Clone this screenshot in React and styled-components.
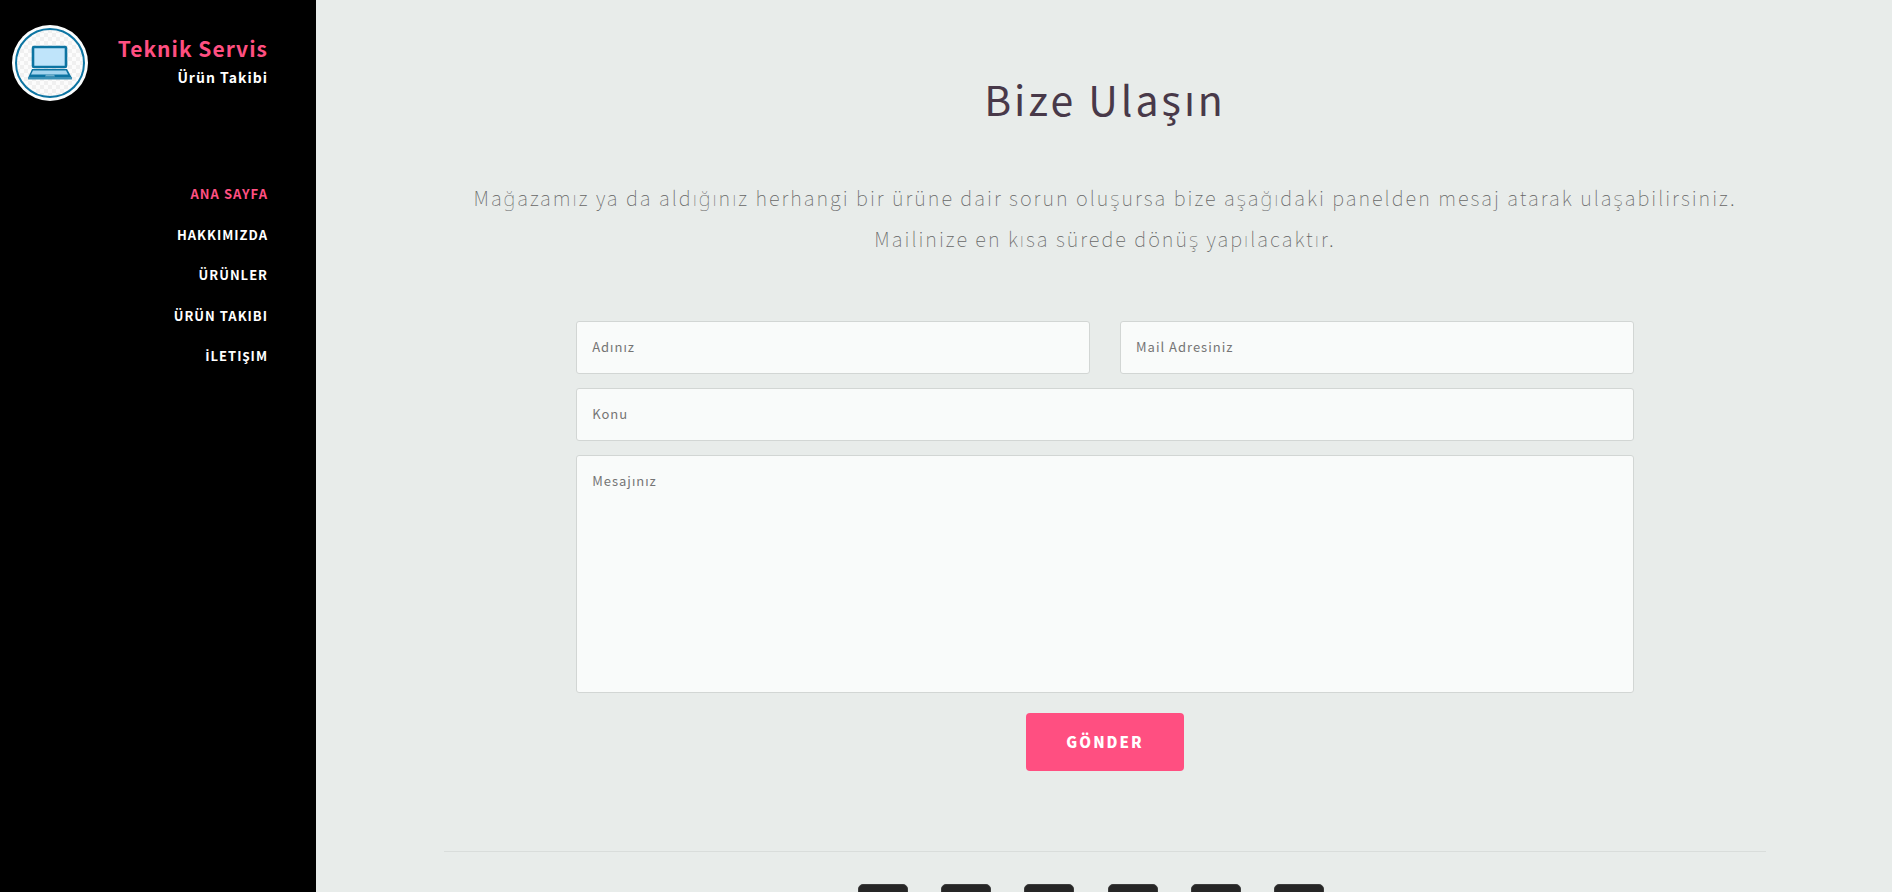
import React from "react";
import styled, { createGlobalStyle } from "styled-components";

const GlobalStyle = createGlobalStyle`
  *, *::before, *::after { box-sizing: border-box; }
  body {
    margin: 0;
    background: #e8ecea;
    font-family: "Noto Sans CJK JP", "Noto Sans", sans-serif;
  }
`;

const Page = styled.div`
  display: flex;
  height: 100vh;
  overflow: hidden;
`;

const Sidebar = styled.aside`
  flex: 0 0 316px;
  padding: 25px 48px 0 12px;
  background: #000;
  color: #fff;
`;

const Brand = styled.header`
  display: flex;
  justify-content: space-between;
  align-items: flex-start;
  height: 76px;
`;

const BrandText = styled.div`
  padding-top: 7px;
  text-align: right;
`;

const BrandName = styled.h1`
  margin: 0;
  color: #ff4f81;
  font-size: 21px;
  font-weight: 700;
  line-height: 32px;
  letter-spacing: 1px;
`;

const BrandTagline = styled.p`
  margin: 0;
  font-size: 14px;
  font-weight: 700;
  line-height: 26px;
  letter-spacing: 1px;
`;

const NavList = styled.ul`
  display: flex;
  flex-direction: column;
  align-items: flex-end;
  justify-content: space-between;
  height: 186px;
  margin: 81px 0 0;
  padding: 0;
  list-style: none;
`;

const NavLink = styled.a`
  display: block;
  color: ${({ $active }) => ($active ? "#ff4f81" : "#fff")};
  font-size: 13px;
  font-weight: 700;
  line-height: 24px;
  letter-spacing: 1px;
  text-decoration: none;
`;

const DottedCapital = styled.span`
  font-family: "Open Sans", sans-serif;
`;

const Main = styled.main`
  flex: 1;
  min-width: 0;
  padding: 62px 0 0 2px;
  overflow-y: auto;
  scrollbar-width: none;
`;

const Content = styled.div`
  width: 84%;
  margin: 0 auto;
`;

const Contact = styled.section`
  padding-bottom: 80px;
  border-bottom: 1px solid #d9dddb;
`;

const Title = styled.h2`
  margin: 0 0 43px;
  color: #483949;
  font-size: 41px;
  font-weight: 400;
  line-height: 72px;
  letter-spacing: 3px;
  text-align: center;
`;

const Intro = styled.p`
  margin: 0 0 62px;
  color: #666;
  font-size: 20px;
  font-weight: 100;
  line-height: 41px;
  letter-spacing: 2px;
  text-align: center;
`;

const Form = styled.form`
  display: grid;
  grid-template-columns: 1fr 1fr;
  gap: 14px 30px;
  width: 80%;
  margin: 0 auto;
`;

const Field = styled.input`
  grid-column: ${({ $wide }) => ($wide ? "1 / -1" : "auto")};
  min-width: 0;
  height: 53px;
  padding: 0 15px 2px;
  border: 1px solid #d2d6d4;
  border-radius: 3px;
  background: #f9fbfa;
  color: #483949;
  font: 400 13px/24px "Noto Sans CJK JP", "Noto Sans", sans-serif;
  letter-spacing: 1px;
  &::placeholder { color: #757575; opacity: 1; }
`;

const Message = styled(Field)`
  height: 238px;
  padding: 13px 15px;
  resize: none;
`;

const SubmitButton = styled.button`
  grid-column: 1 / -1;
  justify-self: center;
  height: 58px;
  margin-top: 6px;
  padding: 0 40px;
  border: 0;
  border-radius: 4px;
  background: #ff4f81;
  color: #fff;
  font: 900 15px/24px "Noto Sans CJK JP", "Noto Sans", sans-serif;
  letter-spacing: 2px;
`;

const SocialList = styled.ul`
  display: flex;
  justify-content: space-between;
  max-width: 467px;
  margin: 32px auto 64px;
  padding: 0;
  list-style: none;
`;

const Footer = styled.footer`
  padding-right: 28px;
`;

const SocialLink = styled.a`
  display: block;
  width: 50px;
  height: 50px;
  border-radius: 5px;
  border: 1px solid #3c3c3c;
  background: #262626;
`;

const navItems = [
  "ANA SAYFA",
  "HAKKIMIZDA",
  "ÜRÜNLER",
  "ÜRÜN TAKIBI",
  <><DottedCapital>İ</DottedCapital>LETIŞIM</>,
];
const socials = ["Facebook", "Twitter", "Instagram", "LinkedIn", "YouTube", "Pinterest"];

function Logo() {
  return (
    <svg width="76" height="76" viewBox="0 0 76 76" aria-hidden="true">
      <defs>
        <pattern id="checks" width="8" height="8" patternUnits="userSpaceOnUse">
          <rect width="8" height="8" fill="#fcfcfc" />
          <path d="M0 0h4v4H0zM4 4h4v4H4z" fill="#f0f0f0" />
        </pattern>
      </defs>
      <circle cx="38" cy="38" r="38" fill="#fbfdfd" />
      <circle cx="38" cy="38" r="34" fill="url(#checks)" stroke="#0c74a2" strokeWidth="2" />
      <rect x="21" y="22" width="33" height="20" rx="1" fill="#bfe4fa" stroke="#0c74a2" strokeWidth="2.6" />
      <path d="M20 44h35l5 9H16z" fill="#0c74a2" />
      <path d="M21 45.5h33l2 4H19z" fill="#a3d5ef" />
      <path d="M34 49.5h8l1 2H33z" fill="#6caecb" />
      <path d="M16 52h44v2.500H16z" fill="#3c91b6" />
    </svg>
  );
}

export default function App() {
  return (
    <>
      <GlobalStyle />
      <Page>
        <Sidebar>
          <Brand>
            <Logo />
            <BrandText>
              <BrandName>Teknik Servis</BrandName>
              <BrandTagline>Ürün Takibi</BrandTagline>
            </BrandText>
          </Brand>
          <nav>
            <NavList>
              {navItems.map((item, index) => (
                <li key={index}>
                  <NavLink href="#" $active={index === 0}>{item}</NavLink>
                </li>
              ))}
            </NavList>
          </nav>
        </Sidebar>
        <Main>
          <Content>
            <Contact>
              <Title>Bize Ulaşın</Title>
              <Intro>
                Mağazamız ya da aldığınız herhangi bir ürüne dair sorun oluşursa bize aşağıdaki
                panelden mesaj atarak ulaşabilirsiniz.
                <br />
                Mailinize en kısa sürede dönüş yapılacaktır.
              </Intro>
              <Form onSubmit={(event) => event.preventDefault()}>
                <Field type="text" placeholder="Adınız" aria-label="Adınız" />
                <Field type="email" placeholder="Mail Adresiniz" aria-label="Mail Adresiniz" />
                <Field $wide type="text" placeholder="Konu" aria-label="Konu" />
                <Message as="textarea" $wide placeholder="Mesajınız" aria-label="Mesajınız" />
                <SubmitButton type="submit">GÖNDER</SubmitButton>
              </Form>
            </Contact>
            <Footer>
              <SocialList>
                {socials.map((name) => (
                  <li key={name}>
                    <SocialLink href="#" aria-label={name} />
                  </li>
                ))}
              </SocialList>
            </Footer>
          </Content>
        </Main>
      </Page>
    </>
  );
}
